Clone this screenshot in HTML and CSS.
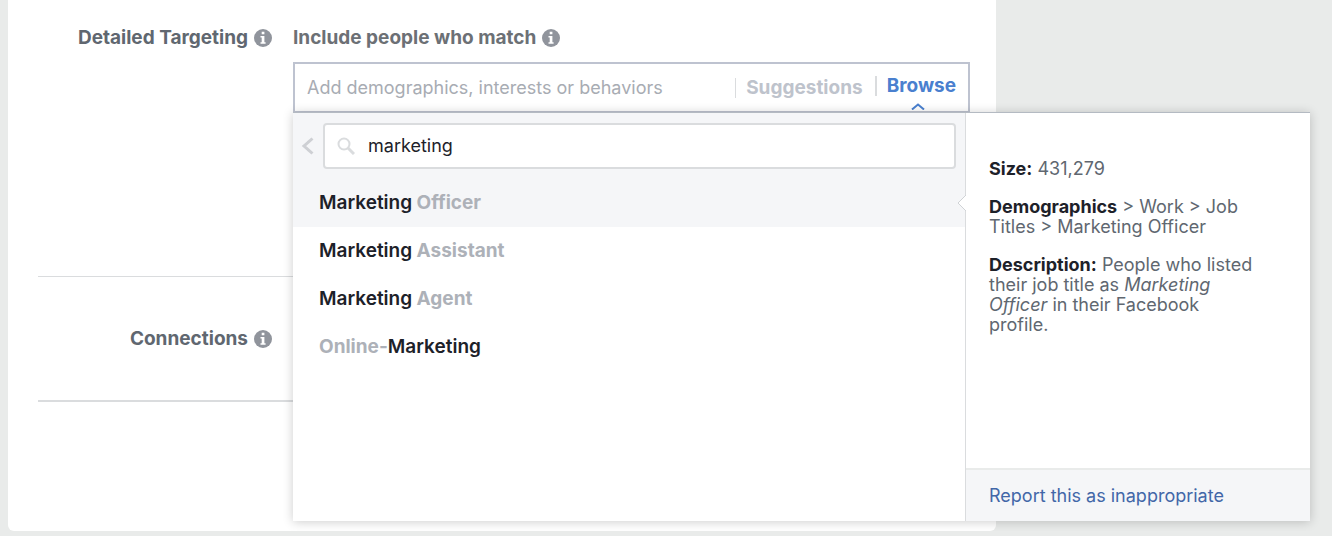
FILE: index.html
```html
<!DOCTYPE html>
<html lang="en">
<head>
  <meta charset="utf-8">
  <title>Detailed Targeting</title>
  <link rel="stylesheet" href="styles.css">
</head>
<body>
  <main class="card">
    <section class="row row-targeting">
      <div class="row-label">
        <h2>Detailed Targeting</h2>
        <svg class="info" viewBox="0 0 18 18" aria-hidden="true">
          <circle cx="9" cy="9" r="9"/>
          <path d="M7.7 2.8h2.700v2.500H7.700zM6.500 7h3.900v6.200h1.200v1.600H6.500v-1.600h1.200V8.600H6.500z"/>
        </svg>
      </div>
      <div class="row-content">
        <div class="row-heading">
          <label for="targeting">Include people who match</label>
          <svg class="info" viewBox="0 0 18 18" aria-hidden="true">
            <circle cx="9" cy="9" r="9"/>
            <path d="M7.7 2.8h2.700v2.500H7.700zM6.500 7h3.900v6.200h1.200v1.600H6.500v-1.600h1.200V8.600H6.500z"/>
          </svg>
        </div>

        <div class="field">
          <input type="text" id="targeting" class="field-input" placeholder="Add demographics, interests or behaviors">
          <button type="button" class="tab">Suggestions</button>
          <button type="button" class="tab tab-active">
            Browse
            <svg class="caret" viewBox="0 0 14 7" aria-hidden="true"><path d="M1 6.500l6-5 6 5"/></svg>
          </button>

          <div class="dropdown">
            <div class="results">
              <div class="search">
                <button type="button" class="back" aria-label="Back">
                  <svg viewBox="0 0 14 18" aria-hidden="true"><path d="M11.500 1.500L3 9l8.500 7.500"/></svg>
                </button>
                <div class="search-box">
                  <svg class="search-icon" viewBox="0 0 18 18" aria-hidden="true">
                    <circle cx="7" cy="7" r="5.500"/>
                    <path d="M11 11l6 6"/>
                  </svg>
                  <input type="text" class="search-input" aria-label="Search" value="marketing">
                </div>
              </div>
              <ul class="list">
                <li><button type="button" class="item item-selected"><b>Marketing</b> Officer</button></li>
                <li><button type="button" class="item"><b>Marketing</b> Assistant</button></li>
                <li><button type="button" class="item"><b>Marketing</b> Agent</button></li>
                <li><button type="button" class="item">Online-<b>Marketing</b></button></li>
              </ul>
            </div>

            <aside class="details">
              <svg class="pointer" viewBox="0 0 9 16" aria-hidden="true"><path d="M9 0L1 8l8 8"/></svg>
              <div class="details-body">
                <p><strong>Size:</strong> 431,279</p>
                <p><strong>Demographics</strong> &gt; Work &gt; Job Titles &gt; Marketing Officer</p>
                <p><strong>Description:</strong> People who listed their job title as <em>Marketing Officer</em> in their Facebook profile.</p>
              </div>
              <div class="details-footer">
                <a href="#">Report this as inappropriate</a>
              </div>
            </aside>
          </div>
        </div>
      </div>
    </section>

    <section class="row row-connections">
      <div class="row-label">
        <h2>Connections</h2>
        <svg class="info" viewBox="0 0 18 18" aria-hidden="true">
          <circle cx="9" cy="9" r="9"/>
          <path d="M7.7 2.8h2.700v2.500H7.700zM6.500 7h3.900v6.200h1.200v1.600H6.500v-1.600h1.200V8.600H6.500z"/>
        </svg>
      </div>
    </section>
  </main>
</body>
</html>
```

FILE: styles.css
```css
* {
  box-sizing: border-box;
}

body {
  margin: 0;
  background-color: #e9ebea;
  color: #606770;
  font-family: Inter, "Liberation Sans", sans-serif;
  font-size: 18px;
  line-height: 20px;
}

button, input {
  font: inherit;
  border: none;
  background: none;
  padding: 0;
  outline: none;
}

button {
  cursor: pointer;
}

h2, p, ul {
  margin: 0;
  padding: 0;
}

.card {
  margin: 0 336px 0 8px;
  padding: 0 26px 129px 30px;
  background-color: #fff;
  border-radius: 0 0 6px 6px;
}

.row {
  display: grid;
  grid-template-columns: 234px 1fr;
  column-gap: 21px;
  border-bottom: 1px solid #dadcde;
}

.row-targeting {
  padding: 28px 0 163px;
}

.row-connections {
  padding: 52px 0 51px;
  border-bottom-width: 2px;
}

.row-label, .row-heading {
  display: flex;
  align-items: center;
  gap: 6px;
  height: 20px;
  font-size: 19px;
  font-weight: 700;
}

.row-label {
  justify-content: flex-end;
}

.row-heading {
  color: #6c7075;
}

.row-label h2 {
  font-size: 19px;
  font-weight: 700;
}

.info {
  width: 18px;
  height: 18px;
}

.info circle {
  fill: #90949c;
}

.info path {
  fill: #fff;
}

/* targeting field */

.field {
  position: relative;
  display: flex;
  align-items: center;
  height: 51px;
  margin-top: 14px;
  padding: 0 12px;
  border: 2px solid #bec3d0;
}

.field-input {
  flex: 1;
  min-width: 0;
}

.field-input::placeholder {
  color: #a8acb3;
  opacity: 1;
}

.tab {
  padding: 0 12px 0 10px;
  border-left: 1px solid #dadcde;
  color: #bec3cc;
  font-size: 19px;
  font-weight: 700;
}

.tab-active {
  position: relative;
  margin-bottom: 3px;
  padding-right: 0;
  border-left-width: 2px;
  color: #4a80cf;
}

.caret {
  position: absolute;
  left: 34px;
  top: 27px;
  width: 14px;
  height: 7px;
  fill: none;
  stroke: #4a80cf;
  stroke-width: 2;
}

/* dropdown */

.dropdown {
  position: absolute;
  top: 48px;
  left: -2px;
  right: -342px;
  display: flex;
  min-height: 409px;
  background-color: #fff;
  border-top: 1px solid #b4bac2;
  box-shadow: 0 1px 10px rgba(0, 0, 0, 0.2);
}

.results {
  flex: 1;
}

.search {
  display: flex;
  align-items: center;
  gap: 8px;
  padding: 10px 9px 10px 8px;
  background-color: #f5f6f8;
}

.back {
  display: flex;
}

.back svg {
  width: 14px;
  height: 18px;
  fill: none;
  stroke: #ced0d4;
  stroke-width: 3;
}

.search-box {
  flex: 1;
  display: flex;
  align-items: center;
  gap: 13px;
  height: 46px;
  padding: 0 12px;
  background-color: #fff;
  border: 2px solid #dadcde;
  border-radius: 4px;
}

.search-icon {
  width: 18px;
  height: 18px;
  fill: none;
  stroke: #dadcde;
  stroke-width: 2;
}

.search-icon path {
  stroke-width: 3;
}

.search-input {
  flex: 1;
  min-width: 0;
  color: #1d2129;
}

.list {
  list-style: none;
}

.item {
  display: block;
  width: 100%;
  height: 48px;
  padding: 0 26px;
  color: #adb1b8;
  font-size: 19px;
  font-weight: 700;
  text-align: left;
}

.item b {
  color: #1d2129;
  font-weight: 600;
}

.item-selected {
  background-color: #f5f6f8;
}

.details {
  position: relative;
  display: flex;
  flex-direction: column;
  width: 345px;
  background-color: #fff;
  border-left: 1px solid #dadcde;
}

/* arrow to the selected item */
.pointer {
  position: absolute;
  left: -9px;
  top: 82px;
  width: 9px;
  height: 16px;
  fill: #fff;
  stroke: #d0d3d6;
}

.details-body {
  flex: 1;
  padding: 46px 50px 24px 23px;
}

.details-body p {
  margin-bottom: 18px;
}

.details-body strong {
  color: #1d2129;
}

.details-footer {
  padding: 16px 23px 15px;
  background-color: #f5f6f8;
  border-top: 2px solid #e9ebea;
}

.details-footer a {
  color: #4267a8;
  text-decoration: none;
}
```
